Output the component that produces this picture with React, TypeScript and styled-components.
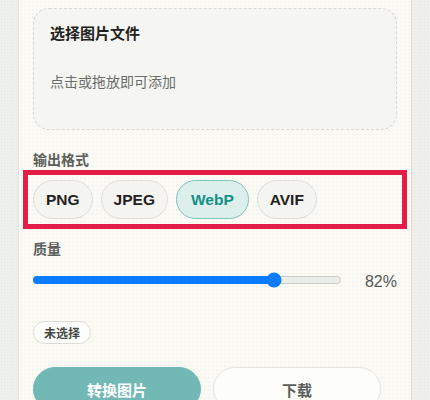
import React from "react";
import styled, { createGlobalStyle } from "styled-components";

const GlobalStyle = createGlobalStyle`
  html, body {
    margin: 0;
    padding: 0;
  }
  body {
    font-family: "Liberation Sans", "Noto Sans CJK SC", sans-serif;
    background-color: #eef1ee;
    background-image:
      radial-gradient(rgba(0, 0, 0, 0.035) 1px, transparent 1px),
      linear-gradient(90deg, #ecf1ee 0%, #eef0ec 60%, #efefeb 100%);
    background-size: 3px 3px, 100% 100%;
    min-height: 400px;
    overflow: hidden;
  }
`;

const Page = styled.div`
  display: flex;
  padding-left: 18px;
  min-height: 400px;
`;

const Card = styled.main`
  box-sizing: border-box;
  width: 394px;
  min-height: 400px;
  padding: 8px 14px 0;
  background-color: #fbfaf5;
  background-image: radial-gradient(rgba(120, 110, 80, 0.04) 1px, transparent 1px);
  background-size: 4px 4px;
  border-left: 1px solid #e2e2dc;
  border-right: 1px solid #dcdcd5;
  display: flex;
  flex-direction: column;
`;

const DropZone = styled.div`
  box-sizing: border-box;
  height: 122px;
  padding: 14px 16px;
  border: 1px dashed #d9d9d4;
  border-radius: 16px;
  background: #f5f6f2;
  display: flex;
  flex-direction: column;
  cursor: pointer;
`;

const DropTitle = styled.div`
  font-size: 15px;
  line-height: 22px;
  font-weight: 700;
  color: #1f2220;
`;

const DropHint = styled.div`
  margin-top: 27px;
  font-size: 14px;
  line-height: 20px;
  color: #6a6d6a;
`;

const Section = styled.section<{ $top: number; $gap: number }>`
  margin-top: ${(p) => p.$top}px;
  display: flex;
  flex-direction: column;
  gap: ${(p) => p.$gap}px;
`;

const Label = styled.div`
  font-size: 14px;
  line-height: 20px;
  font-weight: 700;
  color: #5c605d;
`;

const FormatRow = styled.div`
  display: flex;
  gap: 8px;
  outline: 5px solid #e11d48;
  outline-offset: 5px;
`;

const Pill = styled.button<{ $active?: boolean }>`
  box-sizing: border-box;
  height: 39px;
  padding: 0 ${(p) => (p.$active ? 14 : 12)}px;
  border-radius: 20px;
  font-family: "Liberation Sans", "Noto Sans CJK SC", sans-serif;
  font-size: 15.5px;
  font-weight: 700;
  cursor: pointer;
  border: 1px solid ${(p) => (p.$active ? "#7fc4bd" : "#dfdfd8")};
  background: ${(p) => (p.$active ? "#ddefea" : "#f4f4f0")};
  color: ${(p) => (p.$active ? "#138f88" : "#1f2220")};
`;

const SliderRow = styled.div`
  display: flex;
  align-items: center;
  gap: 24px;
  height: 18px;
`;

const Track = styled.div`
  position: relative;
  flex: 1;
  box-sizing: border-box;
  height: 8px;
  border-radius: 4px;
  background: #ebedea;
  border: 1px solid #c9cbc7;
`;

const Fill = styled.div`
  position: absolute;
  left: -1px;
  top: -1px;
  bottom: -1px;
  border-radius: 4px;
  background: #0b7bff;
`;

const Thumb = styled.div`
  position: absolute;
  top: 50%;
  width: 15px;
  height: 15px;
  border-radius: 50%;
  background: #0b7bff;
  transform: translate(-50%, -50%);
`;

const Value = styled.div`
  font-size: 16px;
  line-height: 18px;
  color: #555856;
  margin-top: 3px;
`;

const Chip = styled.span`
  align-self: flex-start;
  box-sizing: border-box;
  margin-top: 32px;
  height: 23px;
  padding: 0 10px;
  display: inline-flex;
  align-items: center;
  border: 1px solid #dcdcd6;
  border-radius: 12px;
  background: #fdfdfb;
  font-size: 12px;
  font-weight: 700;
  color: #454845;
`;

const Actions = styled.div`
  margin-top: 23px;
  display: grid;
  grid-template-columns: 168px 168px;
  gap: 12px;
`;

const ActionButton = styled.button<{ $primary?: boolean }>`
  box-sizing: border-box;
  height: 44px;
  border-radius: 22px;
  font-family: "Liberation Sans", "Noto Sans CJK SC", sans-serif;
  font-size: 15px;
  font-weight: 700;
  cursor: pointer;
  border: 1px solid ${(p) => (p.$primary ? "#72b9b5" : "#e6e6e0")};
  background: ${(p) => (p.$primary ? "#72b9b5" : "#fdfdfa")};
  color: ${(p) => (p.$primary ? "#ffffff" : "#5a5d5a")};
`;

const formats = ["PNG", "JPEG", "WebP", "AVIF"];

export default function App() {
  const min = 10;
  const max = 100;
  const quality = 82;
  const frac = (quality - min) / (max - min);
  const pos = `calc(7.5px + (100% - 15px) * ${frac})`;

  return (
    <>
      <GlobalStyle />
      <Page>
        <Card>
          <DropZone>
            <DropTitle>选择图片文件</DropTitle>
            <DropHint>点击或拖放即可添加</DropHint>
          </DropZone>

          <Section $top={20} $gap={10}>
            <Label>输出格式</Label>
            <FormatRow>
              {formats.map((f) => (
                <Pill key={f} $active={f === "WebP"}>
                  {f}
                </Pill>
              ))}
            </FormatRow>
          </Section>

          <Section $top={20} $gap={12}>
            <Label>质量</Label>
            <SliderRow>
              <Track>
                <Fill style={{ width: pos }} />
                <Thumb style={{ left: pos }} />
              </Track>
              <Value>{quality}%</Value>
            </SliderRow>
          </Section>

          <Chip>未选择</Chip>

          <Actions>
            <ActionButton $primary>转换图片</ActionButton>
            <ActionButton>下载</ActionButton>
          </Actions>
        </Card>
      </Page>
    </>
  );
}
